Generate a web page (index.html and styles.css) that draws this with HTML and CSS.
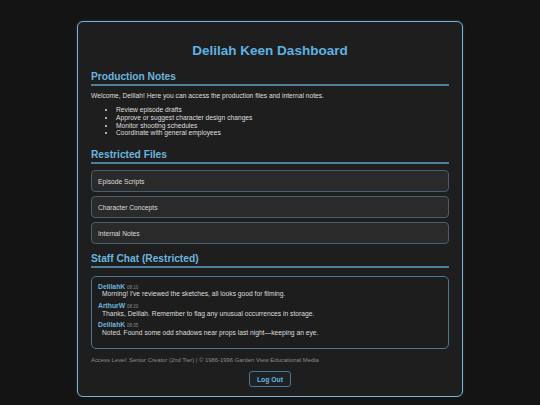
FILE: index.html
```html
<!doctype html>
<html lang="en">
<head>
  <meta charset="utf-8">
  <title>Delilah Keen Dashboard</title>
  <meta name="viewport" content="width=device-width, initial-scale=1">
  <link rel="stylesheet" href="styles.css">
</head>
<body>
  <div class="dashboard">
    <h1 class="dashboard__title">Delilah Keen Dashboard</h1>

    <h2 class="section-title section-title--notes">Production Notes</h2>
    <p class="intro">Welcome, Delilah! Here you can access the production files and internal notes.</p>
    <ul class="tasks">
      <li>Review episode drafts</li>
      <li>Approve or suggest character design changes</li>
      <li>Monitor shooting schedules</li>
      <li>Coordinate with general employees</li>
    </ul>

    <h2 class="section-title section-title--files">Restricted Files</h2>
    <div class="files">
      <div class="file">Episode Scripts</div>
      <div class="file">Character Concepts</div>
      <div class="file">Internal Notes</div>
    </div>

    <h2 class="section-title section-title--chat">Staff Chat (Restricted)</h2>
    <div class="chat">
      <div class="chat__msg">
        <div class="chat__head"><span class="chat__user">DelilahK</span> <span class="chat__time">08:10</span></div>
        <div class="chat__text">Morning! I've reviewed the sketches, all looks good for filming.</div>
      </div>
      <div class="chat__msg">
        <div class="chat__head"><span class="chat__user">ArthurW</span> <span class="chat__time">08:20</span></div>
        <div class="chat__text">Thanks, Delilah. Remember to flag any unusual occurrences in storage.</div>
      </div>
      <div class="chat__msg">
        <div class="chat__head"><span class="chat__user">DelilahK</span> <span class="chat__time">08:35</span></div>
        <div class="chat__text">Noted. Found some odd shadows near props last night—keeping an eye.</div>
      </div>
    </div>

    <div class="footer">Access Level: Senior Creator (2nd Tier) | &copy; 1986-1996 Garden View Educational Media</div>

    <div class="logout">
      <button class="logout__btn" type="button">Log Out</button>
    </div>
  </div>
</body>
</html>
```

FILE: styles.css
```css
html {
  background-color: #141414;
}

body {
  margin: 0;
  padding-top: 21px;
  font-family: "Liberation Sans", Arial, sans-serif;
  font-size: 6.7px;
  color: #dedede;
}

.dashboard {
  width: 358px;
  margin: 0 auto;
  padding: 0 13px 9px;
  background-color: #1e1e1e;
  border: 1px solid #78b2d4;
  border-radius: 6px;
  box-shadow: 0 0 3px rgba(90, 170, 220, 0.25);
}

.dashboard__title {
  margin: 21px 0 0;
  font-size: 13.5px;
  text-align: center;
  color: #5fb2e2;
}

.section-title {
  margin: 10px 0 0;
  padding-bottom: 2px;
  font-size: 10.2px;
  color: #6cb4de;
  border-bottom: 2px solid #4f7f9a;
}

.section-title--notes {
  margin-top: 13px;
}

.section-title--files {
  margin-top: 11.5px;
}

.section-title--chat {
  margin-top: 9px;
}

.intro {
  margin: 6px 0 0;
}

.tasks {
  margin: 7px 0 0;
  padding-left: 25px;
  line-height: 7.8px;
}

.files {
  margin-top: 6.5px;
  display: flex;
  flex-direction: column;
  gap: 4px;
}

.file {
  padding: 6.5px 6px;
  background-color: #2a2a2a;
  border: 1px solid #46606f;
  border-radius: 4px;
  color: #dcdcdc;
}

.chat {
  margin-top: 8px;
  padding: 5.5px 6px 7px;
  border: 1px solid #4c7892;
  border-radius: 5px;
  background-color: #1d1d1d;
}

.chat__msg {
  margin-bottom: 4.5px;
}

.chat__user {
  font-weight: bold;
  font-size: 6.8px;
  color: #6cb4de;
}

.chat__time {
  font-size: 4.5px;
  color: #8a8a8a;
}

.chat__text {
  padding-left: 4px;
  margin-top: 0.8px;
}

.footer {
  margin-top: 8.5px;
  font-size: 5.9px;
  color: #8c8c8c;
}

.logout {
  margin-top: 8px;
  display: flex;
  justify-content: center;
}

.logout__btn {
  font-family: inherit;
  font-size: 6.8px;
  font-weight: bold;
  color: #6cb4de;
  background-color: #1c2226;
  border: 1px solid #4c7892;
  border-radius: 3px;
  padding: 3.5px 7px;
}
```
